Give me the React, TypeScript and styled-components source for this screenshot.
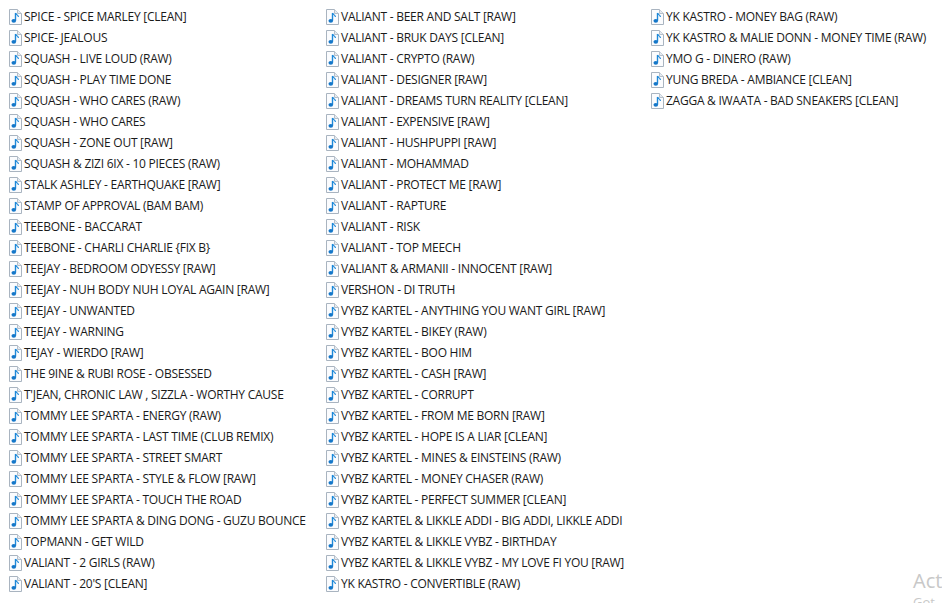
import React from 'react';
import styled, { createGlobalStyle } from 'styled-components';

const columns: { width: number; files: string[] }[] = [
  {
    width: 317,
    files: [
      'SPICE - SPICE MARLEY [CLEAN]',
      'SPICE- JEALOUS',
      'SQUASH - LIVE LOUD (RAW)',
      'SQUASH - PLAY TIME DONE',
      'SQUASH - WHO CARES (RAW)',
      'SQUASH - WHO CARES',
      'SQUASH - ZONE OUT [RAW]',
      'SQUASH & ZIZI 6IX - 10 PIECES (RAW)',
      'STALK ASHLEY - EARTHQUAKE [RAW]',
      'STAMP OF APPROVAL (BAM BAM)',
      'TEEBONE - BACCARAT',
      'TEEBONE - CHARLI CHARLIE {FIX B}',
      'TEEJAY - BEDROOM ODYESSY [RAW]',
      'TEEJAY - NUH BODY NUH LOYAL AGAIN [RAW]',
      'TEEJAY - UNWANTED',
      'TEEJAY - WARNING',
      'TEJAY - WIERDO [RAW]',
      'THE 9INE & RUBI ROSE - OBSESSED',
      "T'JEAN, CHRONIC LAW , SIZZLA - WORTHY CAUSE",
      'TOMMY LEE SPARTA - ENERGY (RAW)',
      'TOMMY LEE SPARTA - LAST TIME (CLUB REMIX)',
      'TOMMY LEE SPARTA - STREET SMART',
      'TOMMY LEE SPARTA - STYLE & FLOW [RAW]',
      'TOMMY LEE SPARTA - TOUCH THE ROAD',
      'TOMMY LEE SPARTA & DING DONG - GUZU BOUNCE',
      'TOPMANN - GET WILD',
      'VALIANT - 2 GIRLS (RAW)',
      "VALIANT - 20'S [CLEAN]",
    ],
  },
  {
    width: 325,
    files: [
      'VALIANT - BEER AND SALT [RAW]',
      'VALIANT - BRUK DAYS [CLEAN]',
      'VALIANT - CRYPTO (RAW)',
      'VALIANT - DESIGNER [RAW]',
      'VALIANT - DREAMS TURN REALITY [CLEAN]',
      'VALIANT - EXPENSIVE [RAW]',
      'VALIANT - HUSHPUPPI [RAW]',
      'VALIANT - MOHAMMAD',
      'VALIANT - PROTECT ME [RAW]',
      'VALIANT - RAPTURE',
      'VALIANT - RISK',
      'VALIANT - TOP MEECH',
      'VALIANT & ARMANII - INNOCENT [RAW]',
      'VERSHON - DI TRUTH',
      'VYBZ KARTEL - ANYTHING YOU WANT GIRL [RAW]',
      'VYBZ KARTEL - BIKEY (RAW)',
      'VYBZ KARTEL - BOO HIM',
      'VYBZ KARTEL - CASH [RAW]',
      'VYBZ KARTEL - CORRUPT',
      'VYBZ KARTEL - FROM ME BORN [RAW]',
      'VYBZ KARTEL - HOPE IS A LIAR [CLEAN]',
      'VYBZ KARTEL - MINES & EINSTEINS (RAW)',
      'VYBZ KARTEL - MONEY CHASER (RAW)',
      'VYBZ KARTEL - PERFECT SUMMER [CLEAN]',
      'VYBZ KARTEL & LIKKLE ADDI - BIG ADDI, LIKKLE ADDI',
      'VYBZ KARTEL & LIKKLE VYBZ - BIRTHDAY',
      'VYBZ KARTEL & LIKKLE VYBZ - MY LOVE FI YOU [RAW]',
      'YK KASTRO - CONVERTIBLE (RAW)',
    ],
  },
  {
    width: 292,
    files: [
      'YK KASTRO - MONEY BAG (RAW)',
      'YK KASTRO & MALIE DONN - MONEY TIME (RAW)',
      'YMO G - DINERO (RAW)',
      'YUNG BREDA - AMBIANCE [CLEAN]',
      'ZAGGA & IWAATA - BAD SNEAKERS [CLEAN]',
    ],
  },
];

const GlobalStyle = createGlobalStyle`
  html, body {
    margin: 0;
    padding: 0;
    height: 100%;
    background: #fff;
    overflow: hidden;
  }
`;

const Page = styled.div`
  position: relative;
  width: 942px;
  height: 603px;
  overflow: hidden;
  display: flex;
  padding: 6px 0 0 8px;
  box-sizing: border-box;
  font-family: "Open Sans", "Noto Sans", sans-serif;
  font-size: 12px;
  color: #1a1a1a;
`;

const Column = styled.div<{ $width: number }>`
  flex: 0 0 ${p => p.$width}px;
  display: flex;
  flex-direction: column;
`;

const FileRow = styled.div`
  height: 21px;
  display: flex;
  align-items: center;
  gap: 0;
  white-space: nowrap;
`;

const FileName = styled.span`
  margin-left: 0;
  letter-spacing: -0.25px;
`;

const Watermark = styled.div`
  position: absolute;
  left: 913px;
  top: 567px;
  color: #c8c8c8;
  font-family: "Open Sans", sans-serif;
  font-size: 20px;
  line-height: 28px;
  white-space: nowrap;
`;

const WatermarkSub = styled.div`
  font-size: 13px;
  line-height: 14px;
`;

function AudioIcon() {
  return (
    <svg width="16" height="18" viewBox="0 0 16 18" style={{ flex: 'none' }}>
      <path d="M1.5 1.5H9.5L13.5 5.5V16.5H1.5Z" fill="#fbfcfe" stroke="#a9b4c0" />
      <path d="M9.5 1.5V5.5H13.5" fill="#e6ebf1" stroke="#b6bfc9" />
      <path d="M7.5 5V12.5" stroke="#1e88d8" strokeWidth="1.4" fill="none" />
      <path d="M7.5 5C8.2 7 10.6 7 10.4 9" stroke="#1e88d8" strokeWidth="1.2" fill="none" />
      <ellipse cx="5.8" cy="12.8" rx="2.3" ry="1.9" fill="#1477c9" />
    </svg>
  );
}

export default function App() {
  return (
    <Page>
      <GlobalStyle />
      {columns.map(column => (
        <Column key={column.files[0]} $width={column.width}>
          {column.files.map(name => (
            <FileRow key={name}>
              <AudioIcon />
              <FileName>{name}</FileName>
            </FileRow>
          ))}
        </Column>
      ))}
      <Watermark>
        Act
        <WatermarkSub>Got</WatermarkSub>
      </Watermark>
    </Page>
  );
}
